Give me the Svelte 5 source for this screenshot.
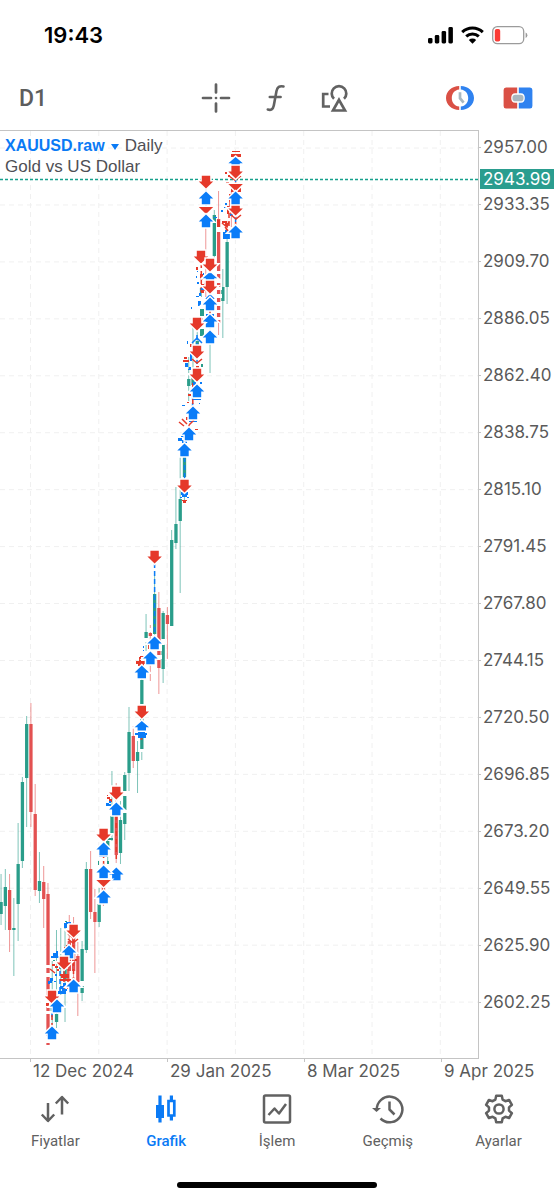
<script>
  const prices = [
    '2957.00', '2933.35', '2909.70', '2886.05', '2862.40', '2838.75', '2815.10', '2791.45',
    '2767.80', '2744.15', '2720.50', '2696.85', '2673.20', '2649.55', '2625.90', '2602.25'
  ];
  const dates = ['12 Dec 2024', '29 Jan 2025', '8 Mar 2025', '9 Apr 2025'];
  const rowStep = 57;
  const firstRow = 17;
  const columns = Array.from({ length: 30 }, (_, i) => 30.5 + i * 68.3);

  // Candle slot, wick top, body top, body bottom, wick bottom, direction
  const candles = [
    [-7, 743, 771, 783, 794, 'u'], [-6, 738, 756, 775, 799, 'u'], [-5, 743, 759, 799, 821, 'd'],
    [-4, 767, 797, 799, 845, 'u'], [-3, 692, 733, 773, 810, 'u'], [-2, 646, 651, 730, 737, 'u'],
    [-1, 585, 593, 647, 696, 'u'], [0, 572, 593, 681, 696, 'd'], [1, 653, 683, 759, 765, 'd'],
    [2, 721, 750, 760, 772, 'u'], [3, 735, 751, 768, 797, 'd'], [4, 752, 763, 914, 914, 'd'],
    [5, 830, 870, 880, 894, 'u'], [6, 799, 883, 891, 897, 'u'], [7, 797, 830, 838, 865, 'u'],
    [8, 793, 825, 850, 891, 'u'], [9, 784, 810, 840, 860, 'd'], [10, 786, 800, 840, 850, 'd'],
    [11, 811, 825, 851, 885, 'd'], [12, 810, 818, 862, 870, 'u'], [13, 731, 738, 819, 822, 'u'],
    [14, 720, 738, 781, 788, 'd'], [15, 758, 781, 791, 842, 'd'], [16, 757, 773, 791, 796, 'u'],
    [17, 735, 750, 770, 775, 'd'], [18, 700, 710, 720, 733, 'u'], [19, 640, 685, 703, 710, 'u'],
    [20, 652, 685, 724, 732, 'd'], [21, 670, 689, 722, 733, 'u'], [22, 641, 644, 693, 709, 'u'],
    [23, 576, 601, 642, 660, 'u'], [24, 595, 605, 630, 637, 'd'], [25, 610, 621, 630, 662, 'u'],
    [26, 540, 549, 618, 629, 'u'], [27, 483, 501, 509, 520, 'u'], [28, 494, 502, 505, 550, 'd'],
    [29, 440, 463, 503, 510, 'u'], [30, 461, 477, 537, 563, 'd'], [31, 480, 482, 538, 552, 'u'],
    [32, 476, 484, 493, 528, 'd'], [33, 399, 409, 495, 495, 'u'], [34, 356, 393, 412, 418, 'u'],
    [35, 325, 368, 390, 462, 'u'], [36, 310, 326, 346, 369, 'u'], [37, 226, 248, 255, 270, 'u'],
    [38, 196, 246, 254, 262, 'u'], [39, 196, 210, 225, 230, 'u'], [40, 140, 157, 162, 166, 'u'],
    [41, 90, 150, 160, 166, 'd'], [42, 130, 200, 204, 242, 'u'], [43, 79, 84, 125, 130, 'u'],
    [44, 60, 88, 192, 204, 'd'], [45, 138, 156, 170, 207, 'u'], [46, 100, 111, 156, 173, 'u'],
    [47, 60, 66, 84, 96, 'd']
  ].map(([slot, high, top, bottom, low, way]) => ({ x: 30.9 + slot * 4.265, high, top, bottom, low, way }));

  // White breaks that older trade marks leave in the candles
  const breaks = [
    [46, 834, 5, 3], [46, 842, 5, 4], [45, 864, 6, 12], [45, 880, 6, 3], [46, 905, 5, 7], [122, 660, 6, 5],
    [122, 679, 6, 3], [156, 510, 6, 10], [156, 524, 6, 4], [161, 508, 6, 5], [139, 573, 6, 3],
    [139, 618, 6, 3], [216, 140, 6, 3], [216, 148, 6, 4], [216, 156, 6, 3], [216, 163, 6, 4],
    [216, 171, 6, 4], [216, 179, 6, 3], [216, 186, 6, 3], [80, 850, 5, 5], [216, 96, 6, 5],
    [149, 497, 4, 4], [143, 507, 6, 4], [182, 362, 6, 3]
  ];

  // Dashed links between entries and exits
  const links = [
    [154.6, 432, 503, 'b'], [206, 57, 84, 'b'], [235.6, 35, 94, 'r'], [235.6, 46, 104, 'b'],
    [197, 204, 240, 'b'], [192.6, 264, 275, 'b'], [192.8, 244, 282, 'r'], [184.6, 326, 362, 'b'],
    [189, 294, 300, 'r'], [210, 148, 196, 'r'], [201.3, 132, 164, 'r'], [229, 82, 96, 'r'],
    [116.3, 668, 700, 'r'], [116.3, 684, 728, 'r'], [103.6, 722, 760, 'r'], [73.5, 806, 856, 'r'],
    [52, 866, 886, 'b'], [52, 884, 898, 'r'], [68, 822, 858, 'r'], [60, 832, 866, 'b'],
    [141.5, 596, 612, 'r'], [150.6, 514, 520, 'b'], [64, 838, 862, 'r'], [226.5, 90, 104, 'r'],
    [206, 84, 96, 'r']
  ];

  // Remnants of covered marks: x, y, width, height, colour
  const chips = [
    [232, 20, 8, 1, 'r'], [231, 23, 10, 3, 'r'], [225, 41, 2, 2, 'r'], [228, 44, 2, 2, 'r'],
    [226, 51, 3, 2, 'r'], [231, 54, 10, 7, 'r'], [229, 63, 2, 8, 'r'], [227, 75, 2, 8, 'r'],
    [224, 76, 2, 1, 'b'], [221, 79, 2, 2, 'b'], [225, 72, 2, 2, 'b'], [230, 83, 3, 2, 'b'],
    [214, 86, 3, 1, 'b'], [222, 90, 5, 2, 'r'], [225, 92, 3, 3, 'r'], [233, 99, 3, 2, 'r'],
    [223, 101, 7, 7, 'b'], [225, 99, 4, 2, 'b'], [217, 89, 3, 7, 'r'], [231, 79, 9, 2, 'r'],
    [198, 121, 7, 1, 'r'], [201, 153, 3, 9, 'r'], [200, 143, 3, 6, 'r'], [196, 136, 2, 3, 'r'],
    [196, 145, 1, 2, 'b'], [197, 151, 2, 2, 'b'], [201, 157, 5, 2, 'b'], [196, 165, 3, 1, 'b'],
    [198, 170, 3, 5, 'b'], [199, 162, 2, 3, 'b'], [205, 149, 3, 3, 'r'], [213, 146, 2, 2, 'b'],
    [203, 142, 1, 2, 'b'], [197, 140, 1, 1, 'b'], [200, 178, 4, 7, 'u'], [206, 183, 8, 2, 'b'],
    [200, 198, 4, 7, 'u'], [201, 187, 2, 2, 'r'], [191, 176, 1, 2, 'b'], [190, 213, 2, 3, 'r'],
    [187, 210, 1, 3, 'b'], [190, 223, 2, 7, 'b'], [183, 229, 6, 2, 'r'], [184, 226, 3, 2, 'r'],
    [185, 232, 3, 4, 'b'], [188, 238, 3, 1, 'b'], [189, 236, 2, 3, 'b'], [196, 235, 3, 2, 'r'],
    [192, 240, 3, 2, 'u'], [201, 233, 2, 3, 'u'], [193, 251, 3, 3, 'b'], [200, 251, 2, 2, 'b'],
    [188, 263, 3, 2, 'r'], [187, 271, 2, 1, 'r'], [182, 274, 3, 1, 'b'], [193, 268, 8, 1, 'b'],
    [199, 272, 1, 1, 'b'], [186, 286, 3, 3, 'r'], [188, 280, 2, 4, 'r'], [189, 290, 8, 1, 'b'],
    [181, 303, 4, 3, 'b'], [178, 307, 4, 3, 'b'], [182, 309, 5, 3, 'b'], [183, 300, 3, 2, 'r'],
    [195, 298, 3, 1, 'r'], [181, 361, 7, 3, 'b'], [182, 364, 5, 2, 'b'], [180, 366, 2, 1, 'b'],
    [187, 366, 2, 1, 'b'], [182, 369, 5, 1, 'r'], [183, 370, 3, 2, 'r'], [140, 525, 6, 1, 'r'],
    [139, 526, 2, 4, 'r'], [136, 530, 10, 3, 'r'], [138, 533, 6, 2, 'r'], [143, 515, 1, 2, 'b'],
    [143, 519, 1, 1, 'b'], [148, 514, 3, 4, 'r'], [107, 666, 3, 2, 'r'], [109, 668, 3, 3, 'r'],
    [106, 672, 3, 3, 'b'], [109, 670, 2, 2, 'b'], [108, 673, 3, 2, 'b'], [107, 664, 1, 1, 'r'],
    [135, 602, 12, 2, 'b'], [138, 604, 8, 3, 'b'], [138, 600, 7, 2, 'b'], [102, 739, 3, 3, 'u'],
    [99, 725, 8, 1, 'b'], [98, 730, 1, 4, 'u'], [107, 730, 2, 3, 'u'], [108, 707, 5, 2, 'u'],
    [64, 792, 3, 5, 'b'], [66, 791, 5, 2, 'b'], [65, 790, 2, 1, 'u'], [69, 794, 2, 3, 'b'],
    [64, 816, 5, 2, 'r'], [66, 814, 2, 6, 'r'], [51, 825, 9, 2, 'b'], [53, 822, 5, 3, 'b'],
    [56, 820, 2, 2, 'b'], [53, 829, 2, 1, 'u'], [52, 833, 3, 2, 'r'], [55, 835, 3, 2, 'r'],
    [57, 838, 2, 2, 'r'], [55, 843, 2, 2, 'b'], [48, 850, 4, 2, 'b'], [50, 847, 3, 3, 'b'],
    [48, 852, 2, 1, 'b'], [60, 843, 9, 2, 'r'], [61, 845, 8, 2, 'r'], [60, 848, 11, 2, 'r'],
    [60, 855, 4, 3, 'b'], [63, 852, 3, 3, 'b'], [62, 858, 5, 2, 'b'], [58, 860, 8, 3, 'b'],
    [46, 872, 3, 3, 'r'], [54, 850, 2, 1, 'b'], [55, 863, 2, 1, 'r'], [75, 828, 2, 2, 'r']
  ];

  const strokes = [
    ['M229 45l6 4 6-4', 'r'], ['M231 84l5 4 5-4', 'r'], ['M230 66v12', 'r'],
    ['M222 92l5 4 2-5', 'r'], ['M206 168l4-4 4 4', 'b'], ['M205 146l5-4 5 4', 'r'],
    ['M192 212l5-5 5 5', 'b'], ['M192 228l5 4 5-4', 'r'], ['M193 223l4 4 4-4', 'r'],
    ['M179 291l5 4M182 288l5 5M194 289l-5 5', 'r'], ['M187 302l-3 5', 'b'],
    ['M68 803l5 4 5-4', 'r'], ['M68 808l5 4 5-4', 'r'], ['M50 838l5 4', 'r'],
    ['M225 96l4 5', 'r']
  ];

  // Trade marks: x, centre y, kind
  const marks = [
    [206, 51, 's'], [206, 67, 'b'], [206, 79, 't'], [206, 90, 'b'], [201, 126, 's'],
    [235.6, 31, 'c'], [235.6, 56, 't'], [235.6, 41, 's'], [235.6, 78, 's'], [235.6, 67, 'b'], [235.6, 101, 'b'],
    [210, 146, 'c'], [210, 134, 's'], [210, 156, 's'], [210, 173, 'b'], [210, 190, 'b'], [210, 206, 'b'],
    [197, 193, 's'], [197, 221, 's'], [197, 244, 's'], [197, 260, 'b'], [193, 282, 'b'], [189, 303, 'b'],
    [184.5, 319, 'b'], [184.5, 355, 's'], [154.6, 426, 's'], [154.6, 512, 'b'], [150.4, 527, 'b'],
    [141.8, 541, 'b'], [141.8, 581, 's'], [141.8, 595, 'c'], [116.3, 662, 's'], [116.3, 678, 'b'],
    [116.3, 743, 'b'], [103.6, 704, 's'], [103.6, 718, 'b'], [103.6, 741, 'b'], [103.6, 752, 't'],
    [103.6, 766, 'b'], [73.6, 800, 's'], [69, 821, 'b'], [64, 832, 's'], [73.6, 855, 'b'],
    [52, 866, 's'], [57, 875, 'b'], [52, 902, 'b']
  ];
  const shapes = {
    b: 'M0-6.5L7.2 .6H4.2V6.3H-4.2V.6H-7.2Z',
    s: 'M0 6.5L7.2-.6H4.2V-6.3H-4.2V-.6H-7.2Z',
    c: 'M0-5L7.2 1.200H4.200V4.500H-4.200V1.200H-7.200Z',
    t: 'M0 4L7.2-3H-7.200Z'
  };
  const tabs = ['Fiyatlar', 'Grafik', 'İşlem', 'Geçmiş', 'Ayarlar'];
</script>

<div class="app">
  <header class="status">
    <time>19:43</time>
    <div class="signals">
      <svg width="25" height="18" viewBox="0 0 25 18" aria-hidden="true">
        <rect x="0" y="12" width="4.5" height="5.5" rx="1.4" /><rect x="6.8" y="9" width="4.5" height="8.5" rx="1.4" />
        <rect x="13.6" y="5" width="4.5" height="12.5" rx="1.4" /><rect x="20.4" y="1" width="4.5" height="16.5" rx="1.4" />
      </svg>
      <svg width="23" height="18" viewBox="0 0 23 18" fill="none" stroke="#000" stroke-width="3" aria-hidden="true">
        <path d="M1.2 6.2a15 15 0 0 1 20.6 0M5.2 10.4a9.2 9.2 0 0 1 12.6 0" />
        <path d="M11.5 17.8L7.8 14a5.4 5.4 0 0 1 7.4 0Z" fill="#000" stroke="none" />
      </svg>
      <svg width="36" height="19" viewBox="0 0 36 19" aria-hidden="true">
        <rect x=".7" y=".7" width="31" height="17" rx="4.6" fill="none" stroke="#9b9b9b" stroke-width="1.3" />
        <rect x="2.8" y="3" width="5.4" height="12.6" rx="1.8" fill="#fb3b35" />
        <path d="M33.6 6.4q1.8.8 1.8 2.8t-1.8 2.8Z" fill="#9b9b9b" />
      </svg>
    </div>
  </header>

  <div class="tools">
    <button class="period">D1</button>
    <div class="middle">
      <button aria-label="Crosshair">
        <svg width="30" height="30" viewBox="0 0 30 30" fill="none" stroke="#626262" stroke-width="2.7" stroke-linecap="round">
          <path d="M15 1.5v8M15 20.5v8M2 15h8M20 15h8M15 15h.01" />
        </svg>
      </button>
      <button aria-label="Indicators">
        <svg width="30" height="30" viewBox="0 0 30 30" fill="none" stroke="#626262" stroke-width="2.6" stroke-linecap="round">
          <path d="M22.5 3.5c-4-1-6.2.7-7 4.5l-2.7 14.5c-.8 4-2.9 5-6 4M8.8 14h10.8" />
        </svg>
      </button>
      <button aria-label="Objects">
        <svg width="30" height="30" viewBox="0 0 30 30" fill="none" stroke="#626262" stroke-width="2.7">
          <path d="M7.500 11H2.200v12.500H9M13 15.800a7.300 7.300 0 1 1 10 0" />
          <path d="M18 16.800l6 10.700h-12Z" />
        </svg>
      </button>
    </div>
    <div class="trade">
      <button aria-label="Session">
        <svg width="30" height="26" viewBox="0 0 30 26">
          <path d="M14.2 1C7 1.200 1 6 1 13s6 11.800 13.200 12v-3.400C9.500 21 6.800 17.500 6.800 13s2.700-8 7.400-8.600Z" fill="#da5045" />
          <path d="M15.800 1C23 1.200 29 6 29 13s-6 11.800-13.200 12v-3.400c4.700-.600 7.400-4.100 7.400-8.600s-2.700-8-7.400-8.600Z" fill="#2f82f0" />
          <path d="M15 7.200v6l3.600 4.500" fill="none" stroke="#a9b8c1" stroke-width="2.700" />
        </svg>
      </button>
      <button aria-label="One click trading">
        <svg width="30" height="22" viewBox="0 0 30 22">
          <path d="M3 .5h11.200v5.700h-2q-4 0-4 4.800t4 4.800h2v5.700H3Q.6 21.500.6 19V3Q.6.500 3 .5Z" fill="#da5045" />
          <path d="M15.800.5H27q2.400 0 2.400 2.500v16q0 2.500-2.400 2.500H15.800v-5.700h2q4 0 4-4.800t-4-4.800h-2Z" fill="#2f82f0" />
          <rect x="9.500" y="7.800" width="11" height="6.400" rx="2.800" fill="#a9b8c1" />
        </svg>
      </button>
    </div>
  </div>

  <main>
    <section class="plot">
      <svg class="drawing" role="img" aria-label="XAUUSD.raw Daily">
        <g class="grid">
          {#each columns as x}<line x1={x} x2={x} y1="0" y2="927" />{/each}
          {#each prices as _, i}<line x1="0" x2="100%" y1={firstRow + i * rowStep - i / 16} y2={firstRow + i * rowStep - i / 16} />{/each}
        </g>
        {#each candles as c}
          <g class={c.way}>
            <rect class="wick" x={c.x - 0.5} y={c.high} width="1" height={c.low - c.high} />
            <rect x={c.x - 1.6} y={c.top} width="3.3" height={c.bottom - c.top} />
          </g>
        {/each}
        {#each breaks as [x, y, w, h]}<rect {x} {y} width={w} height={h} fill="#fff" />{/each}
        {#each links as [x, y1, y2, tone]}<line class="link {tone}" x1={x} x2={x} {y1} {y2} />{/each}
        <line class="last" x1="0" x2="100%" y1="48.5" y2="48.5" />
        {#each chips as [x, y, w, h, tone]}<rect class={tone} {x} {y} width={w} height={h} />{/each}
        {#each strokes as [d, tone]}<path class="stroke {tone}" {d} />{/each}
        {#each marks as [x, y, kind]}
          <path class="mark {kind === 'b' || kind === 'c' ? 'b' : 'r'}" d={shapes[kind]} transform="translate({x} {y})" />
        {/each}
      </svg>
      <div class="caption">
        <div><button class="symbol">XAUUSD.raw <svg width="8" height="6" viewBox="0 0 8 6"><path d="M0 0h8L4 6Z" fill="#0a7af5" /></svg></button> Daily</div>
        <div>Gold vs US Dollar</div>
      </div>
    </section>
    <aside class="scale">
      {#each prices as price}<span>{price}</span>{/each}
      <strong>2943.99</strong>
    </aside>
  </main>
  <div class="dates">
    {#each dates as date}<span>{date}</span>{/each}
  </div>

  <nav>
    {#each tabs as tab, i}
      <button class:active={i === 1}>
        <svg width="30" height="30" viewBox="0 0 30 30" fill="none" stroke="currentColor" stroke-width="2.5" stroke-linejoin="round" aria-hidden="true">
          {#if i === 0}
            <path d="M8 9v17M1.800 20.500L8 27l6.200-6.500M22 20.500V3M15.800 9.500L22 3l6.200 6.500" />
          {:else if i === 1}
            <path d="M9 1.500v27M20.400 1.500v5M20.400 22v4.500" stroke-width="3.200" />
            <rect x="5" y="11" width="8" height="13" fill="currentColor" stroke="none" />
            <path d="M17.500 7h5.800v14.500h-5.800Z" stroke-linejoin="miter" stroke-width="2.700" />
          {:else if i === 2}
            <rect x="2" y="1.500" width="26" height="27" rx="1.500" />
            <path d="M6.500 21l6-6.500 4.500 5L24 10" />
          {:else if i === 3}
            <path d="M3.800 16.500A12.800 12.800 0 1 1 7.500 24.500" /><path d="M-1 14h9l-4.500 4Z" fill="currentColor" stroke="none" />
            <path d="M16.500 7.500v8l5 5" />
          {:else}
            <path d="M12.200 1.800h5.600l.8 3.800 2.800 1.600 3.700-1.200 2.800 4.800-2.900 2.600v3.200l2.900 2.600-2.800 4.800-3.700-1.200-2.800 1.600-.8 3.800h-5.600l-.8-3.800-2.800-1.600L4.900 24l-2.800-4.800L5 16.600v-3.200l-2.900-2.600L4.900 6l3.700 1.200 2.800-1.600Z" />
            <circle cx="15" cy="15" r="4.600" />
          {/if}
        </svg>
        <span>{tab}</span>
      </button>
    {/each}
  </nav>
  <div class="home"></div>
</div>

<style>
  :global(body) { background: #fff; }
  .app { display: flex; flex-direction: column; font-family: Inter, "Noto Sans", sans-serif; color: #5a5a5a; overflow: hidden; }
  button { border: 0; padding: 0; background: none; color: inherit; font: inherit; cursor: pointer; }
  button svg { display: block; }
  .status { display: flex; align-items: center; justify-content: space-between; height: 70px; padding: 0 26px 0 44px; box-sizing: border-box; color: #000; }
  .status time { font-size: 22px; font-weight: 600; }
  .signals { display: flex; align-items: center; gap: 8px; }
  .tools { display: grid; grid-template-columns: 1fr auto 1fr; align-items: center; height: 56px; padding: 0 21px 0 19px; margin-bottom: 4px; }
  .period { justify-self: start; font: 500 23px Roboto, sans-serif; color: #5d5d5d; }
  .middle { display: flex; gap: 30px; }
  .trade { display: flex; align-items: center; justify-content: flex-end; gap: 28px; }
  main { display: flex; }
  .plot { position: relative; flex: 1; min-width: 0; border-top: 1px solid #c4c4c4; border-right: 1px solid #c4c4c4; border-bottom: 1px solid #c4c4c4; }
  .drawing { position: absolute; inset: 0; width: 100%; height: 100%; }
  .grid line { stroke: #f0f0f0; stroke-width: 1; stroke-dasharray: 5 4; }
  .u { fill: #2a9d8a; }
  .d { fill: #e35151; }
  .wick { opacity: .6; }
  .r { fill: #e5392a; stroke: #e5392a; }
  .b { fill: #0a7cf8; stroke: #0a7cf8; }
  rect.r, rect.b { stroke: none; }
  .link { stroke-width: 1.5; stroke-dasharray: 5 3; }
  .last { stroke: #16a08c; stroke-width: 1.5; stroke-dasharray: 3 2; }
  .stroke { fill: none; stroke-width: 1.5; }
  .mark { stroke: #fff; stroke-width: 3; paint-order: stroke; }
  .caption { position: relative; padding: 4px 5px; font: 17px/21px "Liberation Sans", Arial, sans-serif; color: #4f4f55; }
  .symbol { color: #0a7af5; font-size: 16px; font-weight: bold; }
  .symbol svg { display: inline-block; margin: 0 1px 1px 2px; }
  .scale { position: relative; display: flex; flex-direction: column; gap: 37px; width: 75px; padding: 7px 0 47px; font-size: 17px; line-height: 20px; }
  .scale span { padding-left: 4px; }
  .scale span::before { content: ""; position: absolute; left: 0; width: 2px; height: 1px; margin-top: 10px; background: #c4c4c4; }
  .scale strong { position: absolute; top: 39px; left: 1px; right: 0; padding-left: 3px; background: #2a9d8f; color: #fff; font-weight: 400; }
  .dates { display: flex; padding-left: 30px; font-size: 17px; line-height: 24px; }
  .dates span { position: relative; flex: 0 0 137px; padding-left: 3px; box-sizing: border-box; white-space: nowrap; }
  .dates span::before { content: ""; position: absolute; left: 0; top: 0; width: 1px; height: 3px; background: #c4c4c4; }
  nav { display: grid; grid-template-columns: repeat(5, 1fr); padding-top: 11px; font: 400 15px/20px Roboto, sans-serif; color: #616161; }
  nav button { display: flex; flex-direction: column; align-items: center; gap: 7px; }
  nav svg { overflow: visible; }
  nav .active { color: #0a7af5; font-weight: 500; }
  .home { width: 36%; height: 6px; margin: 31px auto 12px; border-radius: 3px; background: #000; }
</style>
